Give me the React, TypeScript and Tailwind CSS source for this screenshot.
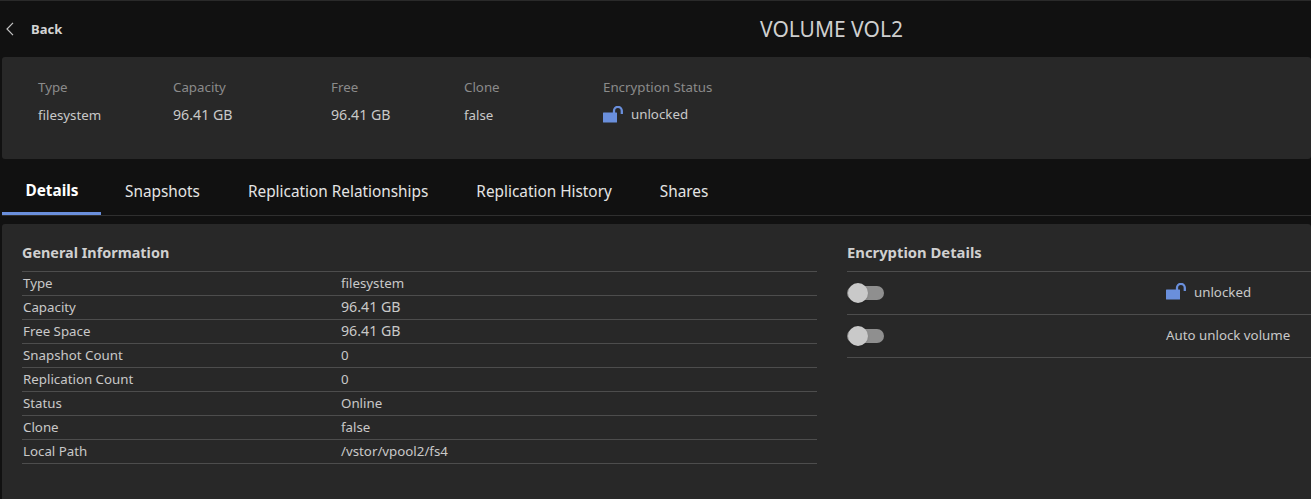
const general = [
  ['Type', 'filesystem', false],
  ['Capacity', '96.41 GB', true],
  ['Free Space', '96.41 GB', true],
  ['Snapshot Count', '0', false],
  ['Replication Count', '0', false],
  ['Status', 'Online', false],
  ['Clone', 'false', false],
  ['Local Path', '/vstor/vpool2/fs4', false],
] as const

const summary = [
  { label: 'Type', value: 'filesystem', width: 'w-[135px]', size: '' },
  { label: 'Capacity', value: '96.41 GB', width: 'w-[158px]', size: 'text-[14.2px]' },
  { label: 'Free', value: '96.41 GB', width: 'w-[133px]', size: 'text-[14.2px]' },
  { label: 'Clone', value: 'false', width: 'w-[139px]', size: '' },
]

const tabs = ['Snapshots', 'Replication Relationships', 'Replication History', 'Shares']

function BackChevron() {
  return (
    <svg width="8" height="14" viewBox="0 0 8 14" className="shrink-0">
      <path d="M7 0.8 1 7l6 6.2" fill="none" stroke="#c4c4c4" strokeWidth="1.2" />
    </svg>
  )
}

function LockIcon() {
  return (
    <svg width="21" height="17" viewBox="0 0 21 17" className="shrink-0">
      <rect x="0" y="6.5" width="14" height="10" rx="0.5" fill="#6a8fdc" />
      <path d="M11 7V4.8a3.9 3.9 0 0 1 7.8 0V8" fill="none" stroke="#6a8fdc" strokeWidth="2.3" />
    </svg>
  )
}

function Toggle() {
  return (
    <div className="relative h-[14px] w-[37px] rounded-full bg-[#8f8f8f]">
      <div className="absolute left-[1px] top-[-3px] h-5 w-5 rounded-full bg-[#c9c9c9] shadow" />
    </div>
  )
}

export default function App() {
  return (
    <div className="h-[499px] overflow-hidden border-t border-[#2a2a2a] bg-[#111111] text-[13.3px] leading-[20px] text-[#c9c9c9] font-['Noto_Sans',sans-serif]">
      <div className="flex h-[56px] items-center">
        <div className="ml-[6px]">
          <BackChevron />
        </div>
        <span className="ml-[17px] w-[698px] text-[13px] font-bold text-[#d4d4d4]">Back</span>
        <h1 className="ml-[31px] text-[21px] text-[#cfcfcf]">VOLUME VOL2</h1>
      </div>

      <div className="ml-[2px] flex h-[102px] rounded-[3px] bg-[#282828] pl-[36px] pt-[20px]">
        {summary.map(s => (
          <div key={s.label} className={s.width}>
            <div className="text-[#8b8b8b]">{s.label}</div>
            <div className={`mt-[8px] ${s.size}`}>{s.value}</div>
          </div>
        ))}
        <div>
          <div className="text-[#8b8b8b]">Encryption Status</div>
          <div className="mt-[7px] flex items-center gap-[7px]">
            <LockIcon />
            <span>unlocked</span>
          </div>
        </div>
      </div>

      <div className="ml-[2px] flex h-[57px] items-end border-b border-[#2f2f2f] text-[15.35px] text-[#e4e4e4]">
        <div className="flex h-[56px] w-[99px] items-center justify-center border-b-[3px] border-[#6a8fdc] pl-[1px] pt-[9px] font-bold text-white">
          Details
        </div>
        {tabs.map(t => (
          <div key={t} className="flex h-[56px] items-center px-[24px] pt-[7px]">
            {t}
          </div>
        ))}
      </div>

      <div className="ml-[2px] mt-[8px] flex h-[280px] rounded-[3px] bg-[#282828] pl-[20px] pt-[18px]">
        <div className="w-[795px]">
          <h2 className="h-[29px] text-[14.4px] font-bold leading-[21px] text-[#d0d0d0]">General Information</h2>
          <div className="border-t border-[#4d4d4d]">
            {general.map(([k, v, wide]) => (
              <div key={k} className="flex h-[24px] items-center border-b border-[#4d4d4d] pb-[1px] pl-[1px]">
                <span className="w-[318px]">{k}</span>
                <span className={wide ? 'text-[14.2px]' : ''}>{v}</span>
              </div>
            ))}
          </div>
        </div>
        <div className="ml-[30px] flex-1">
          <h2 className="h-[29px] text-[14.8px] font-bold leading-[21px] text-[#d0d0d0]">Encryption Details</h2>
          <div className="border-t border-[#4d4d4d]">
            <div className="flex h-[43px] items-center border-b border-[#4d4d4d]">
              <div className="w-[319px]">
                <Toggle />
              </div>
              <div className="flex items-center gap-[7px] pb-[3px]">
                <LockIcon />
                <span>unlocked</span>
              </div>
            </div>
            <div className="flex h-[43px] items-center border-b border-[#4d4d4d]">
              <div className="w-[319px]">
                <Toggle />
              </div>
              <span className="pb-[3px]">Auto unlock volume</span>
            </div>
          </div>
        </div>
      </div>
    </div>
  )
}
